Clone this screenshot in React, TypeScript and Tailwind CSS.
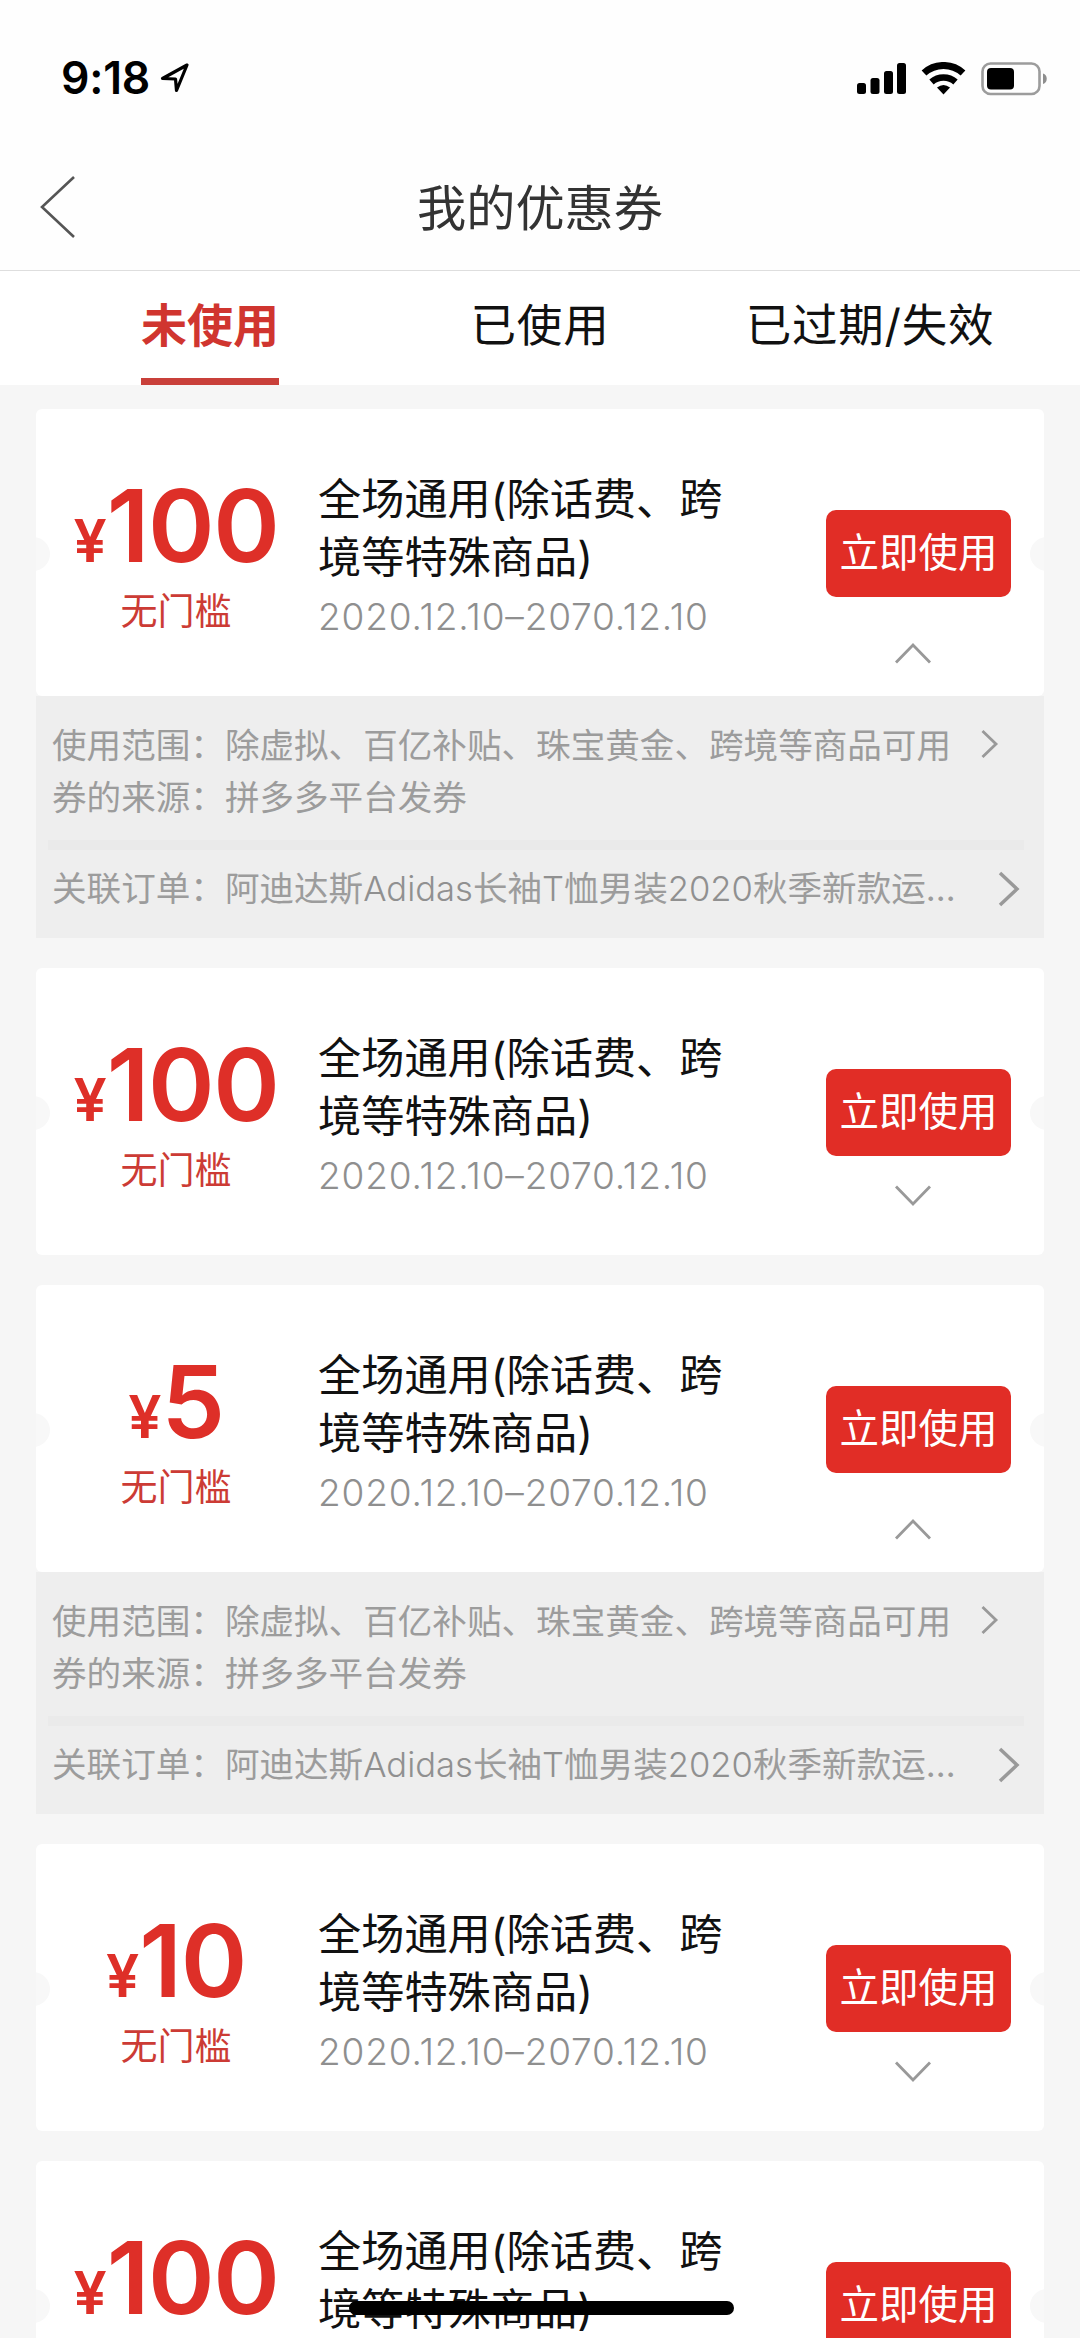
import React, { useState } from 'react';

interface Coupon {
  id: number;
  amount: number;
  open: boolean;
}

const initialCoupons: Coupon[] = [
  { id: 1, amount: 100, open: true },
  { id: 2, amount: 100, open: false },
  { id: 3, amount: 5, open: true },
  { id: 4, amount: 10, open: false },
  { id: 5, amount: 100, open: false },
];

const tabs = ['未使用', '已使用', '已过期/失效'];

const StatusBar: React.FC = () => (
  <div className="flex h-[144px] items-start justify-between pt-[60px] pr-[31px] pl-[61px]">
    <div className="flex items-start">
      <span className="w-[99px] text-[44.5px] leading-[37px] font-semibold tracking-[-0.2px] text-black">9:18</span>
      <svg className="mt-[2px]" width="30" height="31" viewBox="0 0 30 31" fill="none">
        <path d="M27 3 2.5 16.5l13 .5 1 11.5z" stroke="#000" strokeWidth="3.2" strokeLinejoin="round" />
      </svg>
    </div>
    <div className="flex items-start pt-[2px]">
      <svg width="49" height="33" viewBox="0 0 49 33">
        <rect x="0" y="21" width="9" height="11" rx="2.5" />
        <rect x="13.5" y="16" width="9" height="16" rx="2.5" />
        <rect x="27" y="9" width="9" height="23" rx="2.5" />
        <rect x="40" y="1" width="9" height="31" rx="2.5" />
      </svg>
      <svg className="ml-[15px]" width="45" height="33" viewBox="0 0 45 33" fill="none" stroke="#000">
        <path d="M3 11a29 29 0 0 1 39 0" strokeWidth="7" />
        <path d="M10.500 20a18 18 0 0 1 24 0" strokeWidth="6.500" />
        <path d="M22.500 32.500l-6.500-7q6.500-5 13 0z" fill="#000" stroke="none" />
      </svg>
      <svg className="ml-[15px]" width="68" height="34" viewBox="0 0 68 34">
        <rect x="1.500" y="1.500" width="57" height="30.500" rx="8" fill="none" stroke="#9c9c9c" strokeWidth="2.600" />
        <rect x="6" y="6" width="27" height="21.500" rx="4" />
        <path d="M62 11.500c5 1.500 5 9 0 10.500z" fill="#8e8e8e" />
      </svg>
    </div>
  </div>
);

const CouponDetail: React.FC = () => (
  <div className="h-[242px] bg-[#eeeeee] pt-[23px] text-[34.6px] leading-[52px] text-[#9c9c9c]">
    <div className="flex h-[121px] items-start pl-[16px]">
      <div className="w-[930px] whitespace-nowrap">
        <p>使用范围：除虚拟、百亿补贴、珠宝黄金、跨境等商品可用</p>
        <p>券的来源：拼多多平台发券</p>
      </div>
      <svg className="mt-[10px] -ml-[2px]" width="20" height="30" viewBox="0 0 20 30" fill="none">
        <path d="M2.500 2 16 15 2.500 28" stroke="#999" strokeWidth="2.800" />
      </svg>
    </div>
    <div className="mr-[20px] ml-[12px] h-[10px] bg-[#eaeaea]" />
    <div className="flex items-center pt-[12px] pl-[16px]">
      <div className="w-[945px] whitespace-nowrap">
        关联订单：阿迪达斯<span className="font-light text-[#909090]">Adidas</span>长袖
        <span className="font-light text-[#909090]">T</span>恤男装
        <span className="font-light text-[#909090]">2020</span>秋季新款运…
      </div>
      <svg className="mt-[2px]" width="24" height="38" viewBox="0 0 24 38" fill="none">
        <path d="M3 3 20 19 3 35" stroke="#999" strokeWidth="3.500" />
      </svg>
    </div>
  </div>
);

const CouponCard: React.FC<{ coupon: Coupon; onToggle: () => void }> = ({ coupon, onToggle }) => (
  <div className="shrink-0">
    <div className="relative flex h-[287px] overflow-hidden rounded-[6px] bg-white">
      {/* side notches */}
      <span className="absolute top-[128px] -left-[20px] h-[34px] w-[34px] rounded-full bg-[#f8f8f8]" />
      <span className="absolute top-[128px] -right-[20px] h-[34px] w-[34px] rounded-full bg-[#f8f8f8]" />

      <div className="flex w-[280px] flex-col items-center pt-[66px] text-[#de2f28]">
        <div className="flex h-[100px] items-baseline leading-[100px] font-semibold">
          <span className="text-[59px]">¥</span>
          <span className="text-[101px] tracking-[-1.4px]">{coupon.amount}</span>
        </div>
        <div className="mt-[15px] text-[37px] leading-[44px] text-[#cc3b35]">无门槛</div>
      </div>

      <div className="ml-[2px] w-[425px] pt-[61px]">
        <p className="text-[43.2px] leading-[58px] text-[#111111]">全场通用(除话费、跨境等特殊商品)</p>
        <p className="text-[37px] leading-[61px] font-light tracking-[0.8px] whitespace-nowrap text-[#8f8f8f]">
          2020.12.10–2070.12.10
        </p>
      </div>

      <div className="ml-[83px] flex w-[185px] flex-col items-center pt-[101px]">
        <button type="button" className="h-[87px] w-full rounded-[10px] bg-[#e12d26] text-[39.5px] whitespace-nowrap text-white">
          立即使用
        </button>
        <button type="button" onClick={onToggle} className={coupon.open ? 'mt-[45px] mr-[12px]' : 'mt-[29px] mr-[12px]'}>
          <svg className={coupon.open ? '' : 'rotate-180'} width="38" height="22" viewBox="0 0 38 22" fill="none">
            <path d="M2 20.500 19 3l17 17.500" stroke="#999" strokeWidth="2.800" />
          </svg>
        </button>
      </div>
    </div>
    {coupon.open && <CouponDetail />}
  </div>
);

const App: React.FC = () => {
  const [coupons, setCoupons] = useState(initialCoupons);
  const [activeTab, setActiveTab] = useState(0);

  const toggle = (id: number) => {
    setCoupons(coupons.map((c) => (c.id === id ? { ...c, open: !c.open } : c)));
  };

  return (
    <div
      lang="zh-CN"
      className="relative flex h-[2338px] w-[1080px] flex-col overflow-hidden bg-[#f6f6f6] font-['Inter','Noto_Sans_CJK_SC',sans-serif]"
    >
      <header className="shrink-0 bg-[#fefefe]">
        <StatusBar />
        <div className="grid h-[127px] grid-cols-[120px_1fr_120px] items-center border-b border-[#dedede]">
          <svg className="ml-[39px]" width="38" height="64" viewBox="0 0 38 64" fill="none">
            <path d="M35 2 3 32l32 30" stroke="#555" strokeWidth="2.600" />
          </svg>
          <h1 className="pt-[2px] text-center text-[49.2px] leading-[60px] text-[#333333]">我的优惠券</h1>
        </div>
      </header>

      <nav className="flex h-[114px] shrink-0 bg-white px-[45px]">
        {tabs.map((tab, i) => (
          <button
            key={tab}
            type="button"
            onClick={() => setActiveTab(i)}
            className={
              i === activeTab
                ? 'flex flex-1 justify-center text-[46px] font-bold text-[#d0352f]'
                : 'flex flex-1 justify-center text-[45.5px] tracking-[0.8px] text-[#111111]'
            }
          >
            <span className={i === activeTab ? 'h-[114px] border-b-[7px] border-[#c9403a] pt-[20px]' : 'h-[114px] pt-[21px]'}>
              {tab}
            </span>
          </button>
        ))}
      </nav>

      <main className="flex flex-col gap-[30px] px-[36px] pt-[24px]">
        {coupons.map((coupon) => (
          <CouponCard key={coupon.id} coupon={coupon} onToggle={() => toggle(coupon.id)} />
        ))}
      </main>

      {/* home indicator */}
      <div className="absolute top-[2301px] left-[349px] h-[14px] w-[385px] rounded-full bg-black" />
    </div>
  );
};

export default App;
